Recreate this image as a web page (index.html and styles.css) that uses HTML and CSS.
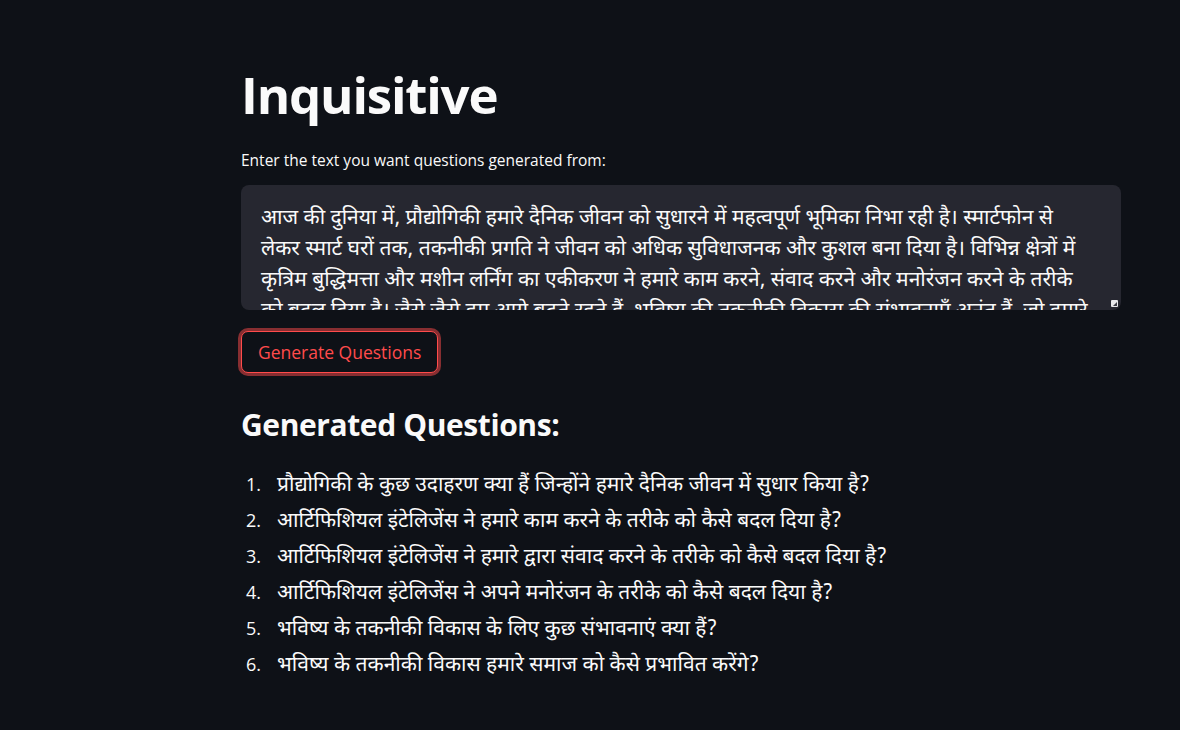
FILE: index.html
```html
<!DOCTYPE html>
<html lang="hi">
<head>
<meta charset="utf-8">
<title>Inquisitive</title>
<link rel="stylesheet" href="styles.css">
</head>
<body>
<main class="app">
  <section class="block">
    <h1 class="title">Inquisitive</h1>
    <label class="label" for="src">Enter the text you want questions generated from:</label>
    <div class="textarea-wrap">
      <textarea id="src" class="textarea">आज की दुनिया में, प्रौद्योगिकी हमारे दैनिक जीवन को सुधारने में महत्वपूर्ण भूमिका निभा रही है। स्मार्टफोन से लेकर स्मार्ट घरों तक, तकनीकी प्रगति ने जीवन को अधिक सुविधाजनक और कुशल बना दिया है। विभिन्न क्षेत्रों में कृत्रिम बुद्धिमत्ता और मशीन लर्निंग का एकीकरण ने हमारे काम करने, संवाद करने और मनोरंजन करने के तरीके को बदल दिया है। जैसे जैसे हम आगे बढ़ते रहते हैं, भविष्य की तकनीकी विकास की संभावनाएँ अनंत हैं, जो हमारे समाज को और भी बेहतर बनाने का वादा करती हैं।</textarea>
      <span class="resize-handle" aria-hidden="true"></span>
    </div>
    <button class="btn" type="button">Generate Questions</button>
    <h3 class="subtitle">Generated Questions:</h3>
    <ol class="questions">
      <li>प्रौद्योगिकी के कुछ उदाहरण क्या हैं जिन्होंने हमारे दैनिक जीवन में सुधार किया है?</li>
      <li>आर्टिफिशियल इंटेलिजेंस ने हमारे काम करने के तरीके को कैसे बदल दिया है?</li>
      <li>आर्टिफिशियल इंटेलिजेंस ने हमारे द्वारा संवाद करने के तरीके को कैसे बदल दिया है?</li>
      <li>आर्टिफिशियल इंटेलिजेंस ने अपने मनोरंजन के तरीके को कैसे बदल दिया है?</li>
      <li>भविष्य के तकनीकी विकास के लिए कुछ संभावनाएं क्या हैं?</li>
      <li>भविष्य के तकनीकी विकास हमारे समाज को कैसे प्रभावित करेंगे?</li>
    </ol>
  </section>
</main>
</body>
</html>
```

FILE: styles.css
```css
html, body {
  margin: 0;
  padding: 0;
  background: #0e1117;
  color: #fafafa;
  font-family: "Open Sans", "Noto Sans", "Noto Sans Devanagari", sans-serif;
}

.app {
  padding: 0 59px 0 241px;
}

.block {
  display: flex;
  flex-direction: column;
  align-items: flex-start;
}

.title {
  margin: 60px 0 0;
  font-size: 51px;
  font-weight: 700;
  line-height: 68px;
  letter-spacing: -1.2px;
}

.label {
  margin-top: 21px;
  font-size: 15.5px;
  line-height: 22px;
}

.textarea-wrap {
  margin-top: 14px;
  width: 100%;
  position: relative;
}

.textarea {
  display: block;
  box-sizing: border-box;
  width: 100%;
  height: 125px;
  margin: 0;
  padding: 19px 25px 0 20px;
  background: #262730;
  color: #fafafa;
  border: none;
  border-radius: 8px;
  font-family: "Noto Sans Devanagari", "Noto Sans", "Open Sans", sans-serif;
  font-size: 21px;
  line-height: 31px;
  resize: none;
  overflow: hidden;
  outline: none;
}

.resize-handle {
  position: absolute;
  right: 3px;
  bottom: 3px;
  width: 7px;
  height: 7px;
  background: #e8e8ea;
  border-radius: 1px;
}

.resize-handle::after {
  content: "";
  position: absolute;
  right: 1px;
  bottom: 1px;
  width: 0;
  height: 0;
  border-left: 4px solid transparent;
  border-bottom: 4px solid #3a3b44;
}

.btn {
  margin-top: 21px;
  margin-left: 0;
  height: 42px;
  padding: 0 16px;
  background: #0e1117;
  color: #ff4b4b;
  border: 1px solid #ff4b4b;
  border-radius: 7px;
  box-shadow: 0 0 0 3px rgba(255, 75, 75, 0.5);
  font-family: "Open Sans", sans-serif;
  font-size: 17.5px;
}

.subtitle {
  margin: 31px 0 0;
  font-size: 30px;
  font-weight: 700;
  line-height: 42px;
  letter-spacing: -0.4px;
}

.questions {
  margin: 22px 0 0;
  padding: 0;
  list-style: none;
  counter-reset: q;
  font-family: "Noto Sans Devanagari", "Noto Sans", "Open Sans", sans-serif;
  font-size: 21px;
  line-height: 36px;
}

.questions li {
  display: flex;
  align-items: baseline;
  height: 36px;
  counter-increment: q;
}

.questions li::before {
  content: counter(q) ".";
  flex: 0 0 31px;
  padding-left: 5px;
  font-family: "Open Sans", sans-serif;
  font-size: 18px;
  line-height: 18px;
}
```
